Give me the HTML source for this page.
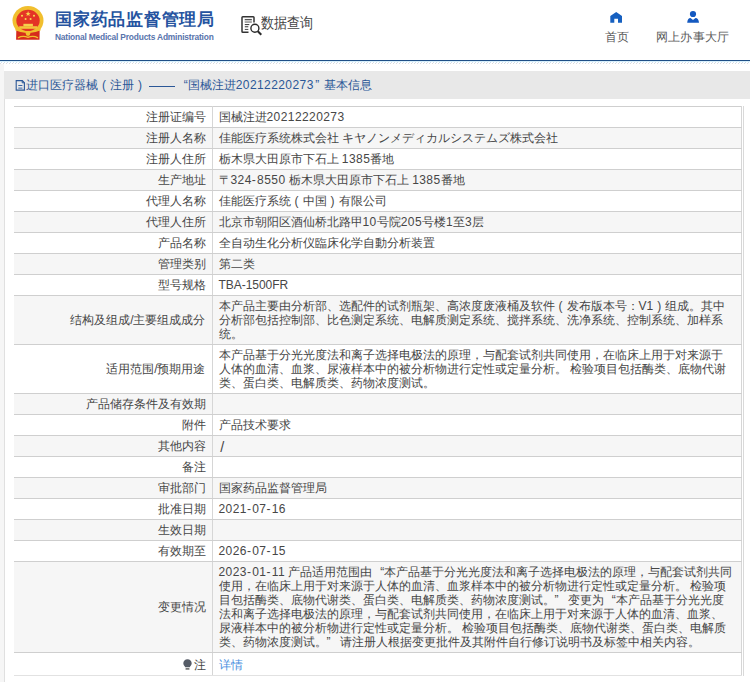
<!DOCTYPE html>
<html><head><meta charset="utf-8">
<style>
*{box-sizing:border-box}
html,body{margin:0;padding:0}
body{width:750px;height:682px;overflow:hidden;background:#fff;font-family:"Liberation Sans",sans-serif;position:relative;color:#333}
.abs{position:absolute}
#title{left:55px;top:8.5px;font-size:16.9px;letter-spacing:0.76px;font-weight:900;color:#2553a0;white-space:nowrap;line-height:22px}
#sub{left:55px;top:30.5px;font-size:8.4px;font-weight:bold;letter-spacing:-0.18px;color:#5874ac;white-space:nowrap;line-height:12px}
#query{left:261px;top:14px;font-size:12.7px;color:#444;white-space:nowrap;line-height:18px;transform:scaleY(1.15);transform-origin:0 50%}
.nav{font-size:12px;color:#5a5a5a;white-space:nowrap;line-height:14px}
#line1{left:0;top:60px;width:750px;height:1px;background:#1f4f86}
#line2{left:0;top:61px;width:750px;height:1px;background:#d8f0fb}
#dots{left:0;top:62px;width:750px;height:1px;background:repeating-linear-gradient(90deg,transparent 0 1px,#cfe0f0 1px 2px,transparent 2px 3px)}
#dots2{left:0;top:63px;width:750px;height:1px;background:repeating-linear-gradient(90deg,#dcdcdc 0 1px,transparent 1px 3px)}
#crumb{left:4px;top:71px;width:746px;height:28px;background:#e8e8e8}
#crumbtext{left:26px;top:78px;font-size:12px;color:#2b5797;white-space:nowrap;line-height:14px}
#cbody{left:4px;top:99px;width:746px;height:583px;border-left:1px solid #e0e0e0;background:#fff}
table{position:absolute;left:14px;top:106px;width:728px;border-collapse:collapse;font-size:12px;line-height:14px;color:#464646}
td{border-top:1px solid #cfcfcf;border-bottom:1px solid #cfcfcf;padding:3px 5px;vertical-align:middle;white-space:nowrap}
td.l{text-align:right;width:198px;padding-right:6px;border-right:1px solid #d6d6d6}
td.v{border-right:1px solid #d6d6d6;padding-left:6px}
tr.g td{background:#f6f6f6}
tr.last td{line-height:16px;padding-top:4px;padding-bottom:2px;border-bottom-color:#e2e2e2}
.n{letter-spacing:0.42px}
.ql{display:inline-block;width:12px;text-align:right;text-indent:0}
.hy{letter-spacing:1.3px}
.pp{display:inline-block;width:12px;text-align:center}
.qr{display:inline-block;width:10px;text-align:left}
#rb{left:743px;top:106px;width:1px;height:570px;background:#d9d9d9}
</style></head><body>
<!-- emblem -->
<svg class="abs" style="left:0;top:0" width="50" height="45" viewBox="0 0 50 45">
  <ellipse cx="28" cy="20.6" rx="15.5" ry="14.5" fill="#f1bf2e"/>
  <ellipse cx="28" cy="20.4" rx="11.7" ry="10.6" fill="#e43426"/>
  <rect x="23.4" y="23.8" width="9.5" height="2.6" fill="#f6cf4e"/>
  <rect x="19.2" y="26.2" width="18.1" height="2.6" fill="#f3c43c"/>
  <path d="M16.3 30.3 Q28 34.5 39.7 30.3 L39.5 39.7 L16.1 39.7 Z" fill="#d62c1c"/>
  <path d="M15.5 29.5 Q28 35 40.5 29.5" stroke="#f1bf2e" stroke-width="1.8" fill="none"/>
  <circle cx="28" cy="33.6" r="2.3" fill="#f1bf2e"/>
  <path d="M18 37.8 Q23 35.2 28 37.4 Q33 35.2 38 37.8" stroke="#f1bf2e" stroke-width="1.4" fill="none"/>
  <polygon points="28.1,11.1 28.8,12.9 30.7,12.9 29.2,14.1 29.7,16 28.1,14.9 26.5,16 27,14.1 25.5,12.9 27.4,12.9" fill="#f8d64c"/>
  <circle cx="22" cy="15.7" r="1.05" fill="#f8d64c"/><circle cx="25.6" cy="19" r="1.05" fill="#f8d64c"/>
  <circle cx="30.6" cy="19" r="1.05" fill="#f8d64c"/><circle cx="34" cy="15.7" r="1.05" fill="#f8d64c"/>
</svg>
<div id="title" class="abs">国家药品监督管理局</div>
<div id="sub" class="abs">National Medical Products Administration</div>
<!-- query icon -->
<svg class="abs" style="left:236.6px;top:12px" width="28" height="26" viewBox="0 0 28 26">
  <path d="M17 10.5 V5.5 Q17 4.7 16.2 4.7 H5.8 Q5 4.7 5 5.5 V19.5 Q5 20.3 5.8 20.3 H11.5" fill="none" stroke="#333" stroke-width="1.5"/>
  <rect x="7.5" y="6.8" width="7.5" height="3.6" fill="#d8d8d8"/>
  <rect x="7.8" y="7" width="7" height="1.1" fill="#555"/>
  <rect x="7.8" y="9.6" width="7" height="1" fill="#777"/>
  <rect x="7.8" y="12" width="4.5" height="1.1" fill="#444"/>
  <rect x="7.8" y="14.2" width="3.5" height="1.1" fill="#444"/>
  <rect x="7.8" y="16.9" width="3.5" height="1.1" fill="#555"/>
  <circle cx="17.9" cy="16.2" r="4" fill="#fff" stroke="#2a2a2a" stroke-width="1.4"/>
  <line x1="20.8" y1="19.2" x2="24.3" y2="22.8" stroke="#2a2a2a" stroke-width="2"/>
</svg>
<div id="query" class="abs">数据查询</div>
<!-- nav -->
<svg class="abs" style="left:610px;top:11px" width="13" height="13" viewBox="0 0 13 13">
  <path d="M0.3 5 L6.2 1 L12 5 L12 11.7 L8 11.7 L8 7.7 L4.3 7.7 L4.3 11.7 L0.3 11.7 Z" fill="#1660c0"/>
</svg>
<div class="abs nav" style="left:605px;top:29.6px">首页</div>
<svg class="abs" style="left:686px;top:10px" width="14" height="14" viewBox="0 0 14 14">
  <circle cx="7" cy="4" r="3.1" fill="#1459c0"/>
  <path d="M1.2 12.8 Q1.5 8.2 4.5 8 L7 10 L9.5 8 Q12.6 8.2 13 12.8 Z" fill="#1459c0"/>
</svg>
<div class="abs nav" style="left:655.5px;top:29.6px;letter-spacing:0.4px">网上办事大厅</div>

<div id="line1" class="abs"></div>
<div id="line2" class="abs"></div>
<div id="dots" class="abs"></div><div id="dots2" class="abs"></div>
<div class="abs" style="left:0;top:64px;width:4px;height:618px;background:#f6f6f6"></div><div id="crumb" class="abs"></div>
<div id="cbody" class="abs"></div>
<svg class="abs" style="left:15px;top:79px" width="11" height="13" viewBox="0 0 11 13">
  <path d="M1.2 1.6 H7.3 L9.4 3.7 V11.1 H1.2 Z" fill="none" stroke="#2b5797" stroke-width="1.1"/>
  <path d="M7.2 1.6 V3.8 H9.4" fill="none" stroke="#2b5797" stroke-width="1"/>
  <path d="M3.3 6.5 H7.4 M3.3 9.1 H7.4" stroke="#3b67a7" stroke-width="1"/>
</svg>
<div id="crumbtext" class="abs">进口医疗器械<span class="pp">(</span>注册<span class="pp">)</span> <span style="display:inline-block;width:26px;height:14px;vertical-align:top;position:relative"><span style="position:absolute;left:0;top:7.5px;width:26px;height:1.2px;background:#2b5797"></span></span> <span style="margin-left:5px">“</span>国械注进<span class="n">20212220273</span><span style="margin-left:1.5px">”</span> <span style="margin-left:1.5px">基本信息</span></div>

<table>
<tr><td class="l">注册证编号</td><td class="v">国械注进<span class="n">20212220273</span></td></tr>
<tr class="g"><td class="l">注册人名称</td><td class="v">佳能医疗系统株式会社 キヤノンメディカルシステムズ株式会社</td></tr>
<tr><td class="l">注册人住所</td><td class="v">栃木県大田原市下石上 <span class="n">1385</span>番地</td></tr>
<tr class="g"><td class="l">生产地址</td><td class="v">〒<span class="n">324<span class="hy">-</span>8550</span> 栃木県大田原市下石上 <span class="n">1385</span>番地</td></tr>
<tr><td class="l">代理人名称</td><td class="v">佳能医疗系统<span class="pp">(</span>中国<span class="pp">)</span>有限公司</td></tr>
<tr class="g"><td class="l">代理人住所</td><td class="v">北京市朝阳区酒仙桥北路甲<span class="n">10</span>号院<span class="n">205</span>号楼<span class="n">1</span>至<span class="n">3</span>层</td></tr>
<tr><td class="l">产品名称</td><td class="v">全自动生化分析仪臨床化学自動分析装置</td></tr>
<tr class="g"><td class="l">管理类别</td><td class="v">第二类</td></tr>
<tr><td class="l">型号规格</td><td class="v"><span style="letter-spacing:-0.05px">TBA-1500FR</span></td></tr>
<tr class="g"><td class="l">结构及组成/主要组成成分</td><td class="v">本产品主要由分析部、选配件的试剂瓶架、高浓度废液桶及软件<span class="pp">(</span>发布版本号：V1<span class="pp">)</span>组成。其中<br>分析部包括控制部、比色测定系统、电解质测定系统、搅拌系统、洗净系统、控制系统、加样系<br>统。</td></tr>
<tr><td class="l">适用范围/预期用途</td><td class="v">本产品基于分光光度法和离子选择电极法的原理，与配套试剂共同使用，在临床上用于对来源于<br>人体的血清、血浆、尿液样本中的被分析物进行定性或定量分析。 检验项目包括酶类、底物代谢<br>类、蛋白类、电解质类、药物浓度测试。</td></tr>
<tr class="g"><td class="l">产品储存条件及有效期</td><td class="v"></td></tr>
<tr><td class="l">附件</td><td class="v">产品技术要求</td></tr>
<tr class="g"><td class="l">其他内容</td><td class="v"><span style="display:inline-block;transform:translate(1.2px,1.5px) scale(1.2,1.2);transform-origin:0 60%">/</span></td></tr>
<tr><td class="l">备注</td><td class="v"></td></tr>
<tr class="g"><td class="l">审批部门</td><td class="v">国家药品监督管理局</td></tr>
<tr><td class="l">批准日期</td><td class="v"><span class="n">2021<span class="hy">-</span>07<span class="hy">-</span>16</span></td></tr>
<tr class="g"><td class="l">生效日期</td><td class="v"></td></tr>
<tr><td class="l">有效期至</td><td class="v"><span class="n">2026<span class="hy">-</span>07<span class="hy">-</span>15</span></td></tr>
<tr class="g"><td class="l">变更情况</td><td class="v"><span class="n">2023<span class="hy">-</span>01<span class="hy">-</span>11</span> 产品适用范围由<span class="ql">“</span>本产品基于分光光度法和离子选择电极法的原理，与配套试剂共同<br>使用，在临床上用于对来源于人体的血清、血浆样本中的被分析物进行定性或定量分析。 检验项<br>目包括酶类、底物代谢类、蛋白类、电解质类、药物浓度测试。<span class="qr">”</span> 变更为<span class="ql">“</span>本产品基于分光光度<br>法和离子选择电极法的原理，与配套试剂共同使用，在临床上用于对来源于人体的血清、血浆、<br>尿液样本中的被分析物进行定性或定量分析。 检验项目包括酶类、底物代谢类、蛋白类、电解质<br>类、药物浓度测试。<span class="qr">”</span> 请注册人根据变更批件及其附件自行修订说明书及标签中相关内容。</td></tr>
<tr class="last"><td class="l"><svg width="9" height="11" viewBox="0 0 9 11" style="vertical-align:-1px;margin-right:2px"><path d="M4.5 0.3 C7 0.3 8.7 2 8.7 4.3 C8.7 6.2 7.3 7 6.8 8.3 L2.2 8.3 C1.7 7 0.3 6.2 0.3 4.3 C0.3 2 2 0.3 4.5 0.3 Z" fill="#555b66"/><rect x="2.5" y="9" width="4" height="1.8" rx="0.6" fill="#777"/></svg>注</td><td class="v"><span style="color:#4a8fe0">详情</span></td></tr>
</table>
<div id="rb" class="abs"></div>
</body></html>
